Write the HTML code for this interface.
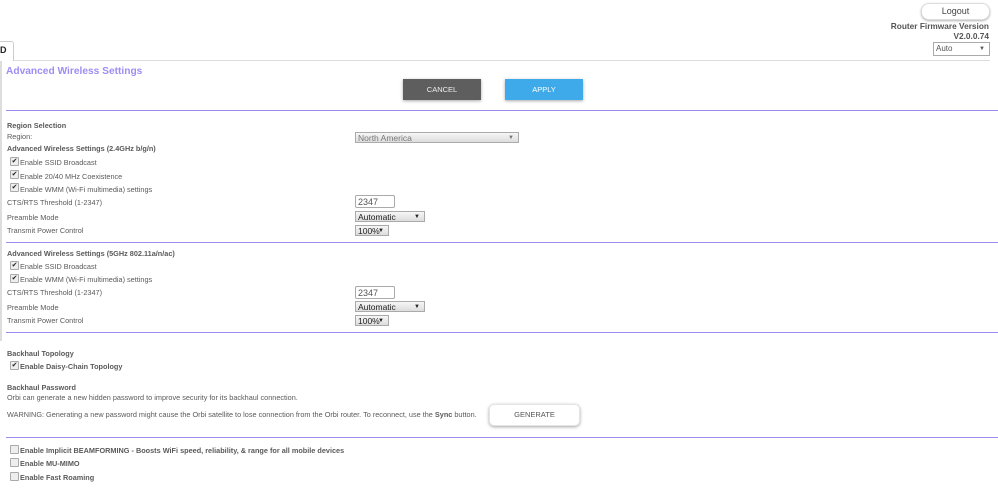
<!DOCTYPE html>
<html><head><style>
body{margin:0;width:998px;height:503px;background:#fff;font-family:"Liberation Sans",Arial,sans-serif;color:#5a5a5a;position:relative;overflow:hidden;font-size:7.3px}
.a{position:absolute;white-space:nowrap;line-height:10px}
.b{font-weight:bold}
.pl{position:absolute;left:6px;right:0;height:1px;background:#9b8cf0}
.cb{position:absolute;width:7px;height:7px;border:1px solid #aaa;background:#eee;border-radius:1px;font-size:7px;line-height:7px;text-align:center;color:#222}
.sel{position:absolute;border:1px solid #aaa;background:linear-gradient(#f6f6f6,#ddd);font-size:8.5px;color:#222;line-height:10px;padding-left:2px;box-sizing:border-box}
.sel:after{content:"▼";position:absolute;right:4px;top:0;font-size:6px}
.btn{position:absolute;text-align:center;font-size:7.5px;box-shadow:0 1px 3px rgba(0,0,0,.35)}
</style></head><body>
<div class="btn" style="left:921px;top:3px;width:67px;height:15px;line-height:15px;border-radius:8px;background:#fff;color:#444;font-size:9px;border:1px solid #ddd;box-shadow:0 1px 2px rgba(0,0,0,.3)">Logout</div>
<div class="a b" style="right:9px;top:21px;font-size:8.3px;color:#555">Router Firmware Version</div>
<div class="a b" style="right:9px;top:31px;font-size:8.3px;color:#555">V2.0.0.74</div>
<div class="sel" style="left:933px;top:42px;width:57px;height:14px;line-height:12px;background:#fff;font-size:8px;color:#555">Auto</div>
<div style="position:absolute;left:0;top:41px;width:13px;height:19px;border:1px solid #ccc;border-left:none;border-bottom:none;border-radius:0 3px 0 0"></div>
<div class="a b" style="left:0;top:45px;font-size:9px;color:#222">D</div>
<div style="position:absolute;left:14px;right:8px;top:60px;height:1px;background:#ddd"></div>
<div style="position:absolute;left:0;top:61px;width:2px;height:280px;background:#ddd"></div>
<div class="a b" style="left:6px;top:66px;font-size:10.2px;line-height:12px;color:#9d8df5">Advanced Wireless Settings</div>
<div class="btn" style="left:403px;top:79px;width:78px;height:21px;line-height:21px;background:#5e5e5e;color:#eee">CANCEL</div>
<div class="btn" style="left:505px;top:79px;width:78px;height:21px;line-height:21px;background:#3faae9;color:#fff">APPLY</div>
<div class="pl" style="top:110px"></div>

<div class="a b" style="left:7px;top:121px">Region Selection</div>
<div class="a" style="left:7px;top:132px">Region:</div>
<div class="sel" style="left:355px;top:132px;width:164px;height:11px;color:#777">North America</div>
<div class="a b" style="left:7px;top:144px">Advanced Wireless Settings (2.4GHz b/g/n)</div>
<div class="cb" style="left:10px;top:157px">✔</div><div class="a" style="left:20px;top:158px">Enable SSID Broadcast</div>
<div class="cb" style="left:10px;top:170px">✔</div><div class="a" style="left:20px;top:172px">Enable 20/40 MHz Coexistence</div>
<div class="cb" style="left:10px;top:183px">✔</div><div class="a" style="left:20px;top:185px">Enable WMM (Wi-Fi multimedia) settings</div>
<div class="a" style="left:7px;top:198px">CTS/RTS Threshold (1-2347)</div>
<div style="position:absolute;left:355px;top:195px;width:40px;height:13px;border:1px solid #aaa;border-radius:2px;font-size:9px;line-height:13px;padding-left:2px;color:#555;box-sizing:border-box">2347</div>
<div class="a" style="left:7px;top:213px">Preamble Mode</div>
<div class="sel" style="left:355px;top:211px;width:70px;height:11px">Automatic</div>
<div class="a" style="left:7px;top:226px">Transmit Power Control</div>
<div class="sel" style="left:355px;top:225px;width:34px;height:11px">100%</div>
<div class="pl" style="top:242px"></div>

<div class="a b" style="left:7px;top:249px">Advanced Wireless Settings (5GHz 802.11a/n/ac)</div>
<div class="cb" style="left:10px;top:261px">✔</div><div class="a" style="left:20px;top:262px">Enable SSID Broadcast</div>
<div class="cb" style="left:10px;top:274px">✔</div><div class="a" style="left:20px;top:275px">Enable WMM (Wi-Fi multimedia) settings</div>
<div class="a" style="left:7px;top:288px">CTS/RTS Threshold (1-2347)</div>
<div style="position:absolute;left:355px;top:286px;width:40px;height:13px;border:1px solid #aaa;border-radius:2px;font-size:9px;line-height:13px;padding-left:2px;color:#555;box-sizing:border-box">2347</div>
<div class="a" style="left:7px;top:303px">Preamble Mode</div>
<div class="sel" style="left:355px;top:301px;width:70px;height:11px">Automatic</div>
<div class="a" style="left:7px;top:316px">Transmit Power Control</div>
<div class="sel" style="left:355px;top:315px;width:34px;height:11px">100%</div>
<div class="pl" style="top:332px"></div>

<div class="a b" style="left:7px;top:349px">Backhaul Topology</div>
<div class="cb" style="left:10px;top:361px">✔</div><div class="a b" style="left:20px;top:362px">Enable Daisy-Chain Topology</div>
<div class="a b" style="left:7px;top:383px">Backhaul Password</div>
<div class="a" style="left:7px;top:393px">Orbi can generate a new hidden password to improve security for its backhaul connection.</div>
<div class="a" style="left:7px;top:410px">WARNING: Generating a new password might cause the Orbi satellite to lose connection from the Orbi router. To reconnect, use the <b>Sync</b> button.</div>
<div class="btn" style="left:489px;top:404px;width:89px;height:20px;line-height:20px;border-radius:5px;background:#fff;color:#555;border:1px solid #e4e4e4">GENERATE</div>
<div class="pl" style="top:437px"></div>

<div class="cb" style="left:10px;top:445px"></div><div class="a b" style="left:20px;top:446px">Enable Implicit BEAMFORMING - Boosts WiFi speed, reliability, &amp; range for all mobile devices</div>
<div class="cb" style="left:10px;top:458px"></div><div class="a b" style="left:20px;top:459px">Enable MU-MIMO</div>
<div class="cb" style="left:10px;top:472px"></div><div class="a b" style="left:20px;top:473px">Enable Fast Roaming</div>
</body></html>
